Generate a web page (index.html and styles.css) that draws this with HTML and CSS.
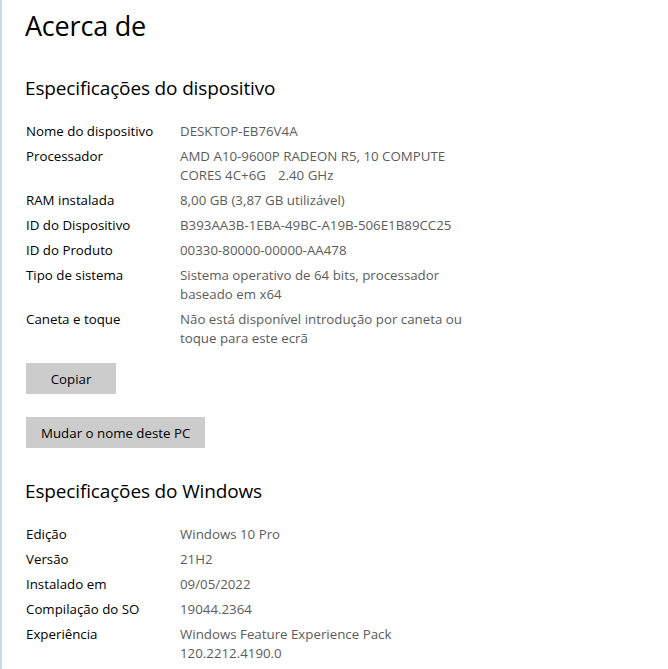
FILE: index.html
```html
<!DOCTYPE html>
<html lang="pt">
<head>
<meta charset="utf-8">
<title>Acerca de</title>
<link rel="stylesheet" href="styles.css">
</head>
<body>
<main class="page">
  <h1 class="title">Acerca de</h1>

  <section class="section">
    <h2 class="section-title">Especificações do dispositivo</h2>
    <dl class="specs">
      <div class="row"><dt>Nome do dispositivo</dt><dd>DESKTOP-EB76V4A</dd></div>
      <div class="row"><dt>Processador</dt><dd>AMD A10-9600P RADEON R5, 10 COMPUTE<br>CORES 4C+6G<span class="gap"></span>2.40 GHz</dd></div>
      <div class="row"><dt>RAM instalada</dt><dd>8,00 GB (3,87 GB utilizável)</dd></div>
      <div class="row"><dt>ID do Dispositivo</dt><dd>B393AA3B-1EBA-49BC-A19B-506E1B89CC25</dd></div>
      <div class="row"><dt>ID do Produto</dt><dd>00330-80000-00000-AA478</dd></div>
      <div class="row"><dt>Tipo de sistema</dt><dd>Sistema operativo de 64 bits, processador<br>baseado em x64</dd></div>
      <div class="row"><dt>Caneta e toque</dt><dd>Não está disponível introdução por caneta ou<br>toque para este ecrã</dd></div>
    </dl>
    <div class="actions">
      <button class="btn" type="button">Copiar</button>
      <button class="btn" type="button">Mudar o nome deste PC</button>
    </div>
  </section>

  <section class="section">
    <h2 class="section-title">Especificações do Windows</h2>
    <dl class="specs">
      <div class="row"><dt>Edição</dt><dd>Windows 10 Pro</dd></div>
      <div class="row"><dt>Versão</dt><dd>21H2</dd></div>
      <div class="row"><dt>Instalado em</dt><dd>09/05/2022</dd></div>
      <div class="row"><dt>Compilação do SO</dt><dd>19044.2364</dd></div>
      <div class="row"><dt>Experiência</dt><dd>Windows Feature Experience Pack<br>120.2212.4190.0</dd></div>
    </dl>
  </section>
</main>
</body>
</html>
```

FILE: styles.css
```css
* {
  box-sizing: border-box;
}

html, body {
  margin: 0;
  padding: 0;
  background: #ffffff;
}

body {
  font-family: "Open Sans", "Noto Sans", "Liberation Sans", sans-serif;
  color: #000000;
  min-height: 669px;
  border-left: 2px solid #c4dbe5;
}

.page {
  padding: 8px 0 0 23px;
}

.title {
  margin: 0;
  font-size: 27px;
  font-weight: 400;
  line-height: 36px;
  letter-spacing: -0.2px;
}

.section-title {
  margin: 30px 0 20px;
  font-size: 19px;
  font-weight: 400;
  line-height: 28px;
  letter-spacing: -0.15px;
}

.specs {
  margin: 0;
  display: flex;
  flex-direction: column;
  gap: 6px;
  font-size: 13.3px;
  line-height: 19px;
}

.row {
  display: grid;
  grid-template-columns: 155px 300px;
}

.row dt {
  margin: 0;
  padding-left: 1px;
  color: #000000;
}

.row dd {
  margin: 0;
  color: #5c5c5c;
}

.gap {
  display: inline-block;
  width: 12px;
}

.actions {
  margin-top: 15px;
  display: flex;
  flex-direction: column;
  align-items: flex-start;
  gap: 23px;
}

.btn {
  margin-left: 1px;
  height: 31px;
  min-width: 90px;
  padding: 0 15px;
  border: none;
  background: #cccccc;
  color: #000000;
  font-family: inherit;
  font-size: 13.3px;
}

.section + .section .section-title {
  margin-top: 29px;
}
```
